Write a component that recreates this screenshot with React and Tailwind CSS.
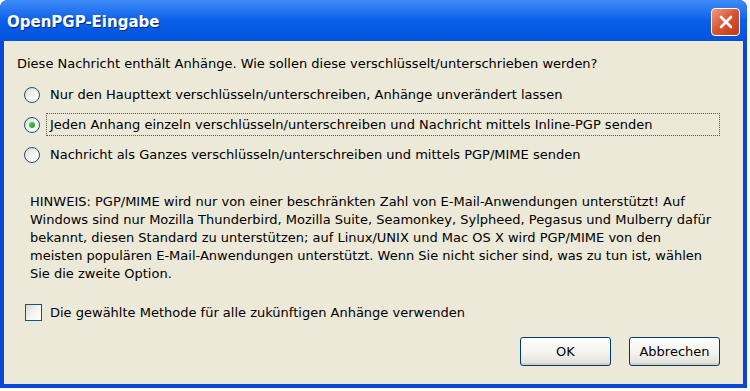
import { useState } from "react";

function Radio({ checked }) {
  return (
    <span className="relative flex h-[16px] w-[16px] shrink-0 items-center justify-center rounded-full border border-[#1c5180] bg-gradient-to-br from-[#dcd9cd] via-[#f4f3ee] to-white">
      {checked && (
        <span className="h-[6px] w-[6px] rounded-full bg-gradient-to-br from-[#55d451] to-[#1f9b1c]" />
      )}
    </span>
  );
}

function XpButton({ children }) {
  return (
    <button className="flex h-[29px] w-[91px] items-center justify-center rounded-[3px] border border-[#003c74] bg-gradient-to-b from-white via-[#f4f4f0] to-[#e3e1d8] text-[13px] text-black shadow-[inset_0_-2px_0_#d6d0c5]">
      {children}
    </button>
  );
}

export default function App() {
  const [choice] = useState(1);

  const options = [
    "Nur den Haupttext verschlüsseln/unterschreiben, Anhänge unverändert lassen",
    "Jeden Anhang einzeln verschlüsseln/unterschreiben und Nachricht mittels Inline-PGP senden",
    "Nachricht als Ganzes verschlüsseln/unterschreiben und mittels PGP/MIME senden",
  ];

  return (
    <div
      className="h-[391px] w-[750px] bg-white"
      style={{ fontFamily: "Tahoma, 'DejaVu Sans', sans-serif" }}
    >
      <div className="flex h-[388px] w-[747px] flex-col overflow-hidden rounded-t-[8px] bg-[#0a46d8]">
        {/* Titelleiste */}
        <div className="flex h-[41px] shrink-0 items-center justify-between bg-gradient-to-b from-[#3d8cf7] via-[#0a5fe8] to-[#0452dc] pl-[7px] pr-[7px] pt-[3px]">
          <span className="text-[15px] font-bold text-white [text-shadow:1px_1px_0_#0a2a80]">
            OpenPGP-Eingabe
          </span>
          <div className="flex h-[28px] w-[29px] items-center justify-center rounded-[4px] border border-white bg-gradient-to-br from-[#ec9a80] via-[#d9532f] to-[#bf3a18]">
            <svg width="16" height="16" viewBox="0 0 16 16">
              <path d="M3 3 L13 13 M13 3 L3 13" stroke="white" strokeWidth="2.6" strokeLinecap="round" />
            </svg>
          </div>
        </div>

        {/* Inhalt */}
        <div className="mx-[4px] mb-[4px] flex flex-1 flex-col whitespace-nowrap bg-[#ece9d8] text-[13px] leading-[17px] text-black">
          <p className="ml-[13px] mt-[14px]">
            Diese Nachricht enthält Anhänge. Wie sollen diese verschlüsselt/unterschrieben werden?
          </p>

          <div className="mt-[11px] flex flex-col gap-[7px]">
            {options.map((o, i) => (
              <div key={i} className="ml-[20px] flex items-center gap-[6px]">
                <Radio checked={i === choice} />
                <span
                  className={
                    i === choice
                      ? "w-[674px] border border-dotted border-[#555] py-[2px] pl-[3px]"
                      : "py-[3px] pl-[4px]"
                  }
                >
                  {o}
                </span>
              </div>
            ))}
          </div>

          <p className="ml-[26px] mt-[27px] leading-[18px]">
            HINWEIS: PGP/MIME wird nur von einer beschränkten Zahl von E-Mail-Anwendungen unterstützt! Auf
            <br />
            Windows sind nur Mozilla Thunderbird, Mozilla Suite, Seamonkey, Sylpheed, Pegasus und Mulberry dafür
            <br />
            bekannt, diesen Standard zu unterstützen; auf Linux/UNIX und Mac OS X wird PGP/MIME von den
            <br />
            meisten populären E-Mail-Anwendungen unterstützt. Wenn Sie nicht sicher sind, was zu tun ist, wählen
            <br />
            Sie die zweite Option.
          </p>

          <div className="ml-[21px] mt-[21px] flex items-center gap-[8px]">
            <span className="h-[17px] w-[17px] shrink-0 border border-[#1c5180] bg-gradient-to-br from-[#dcd9cd] via-[#f4f3ee] to-white" />
            <span>Die gewählte Methode für alle zukünftigen Anhänge verwenden</span>
          </div>

          <div className="mr-[23px] mt-[16px] flex justify-end gap-[18px]">
            <XpButton>OK</XpButton>
            <XpButton>Abbrechen</XpButton>
          </div>
        </div>
      </div>
    </div>
  );
}
